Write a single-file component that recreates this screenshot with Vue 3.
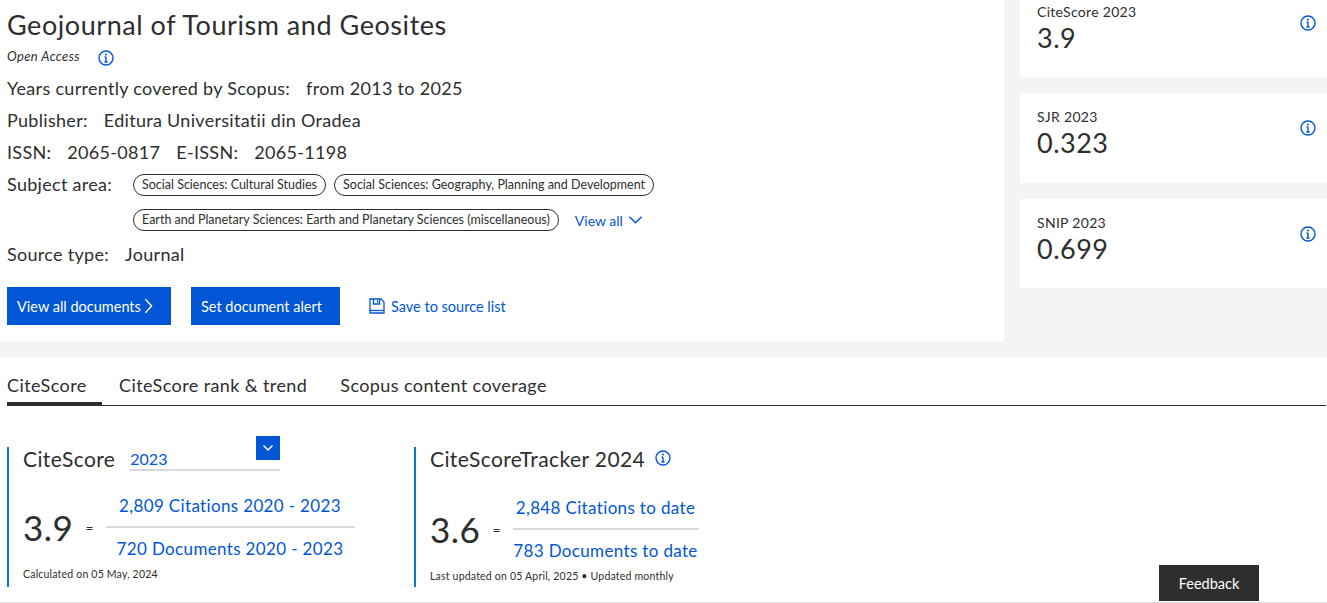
<script setup>
const chips1 = ['Social Sciences: Cultural Studies', 'Social Sciences: Geography, Planning and Development']
const metrics = [
  { label: 'CiteScore 2023', value: '3.9', cls: 'm1' },
  { label: 'SJR 2023', value: '0.323', cls: 'm2' },
  { label: 'SNIP 2023', value: '0.699', cls: 'm3' }
]
</script>

<template>
  <div class="page">
    <div class="top">
      <section class="info">
        <h1 class="title">Geojournal of Tourism and Geosites</h1>
        <div class="oa">
          <em>Open Access</em>
          <svg class="ico" viewBox="0 0 16 16"><circle cx="8" cy="8" r="7" /><path d="M8 7v5M6.4 12h3.2M6.6 7H8" /><circle class="dot" cx="8" cy="4.6" r="1" /></svg>
        </div>
        <div class="line l1"><span>Years currently covered by Scopus:</span><span>from 2013 to 2025</span></div>
        <div class="line"><span>Publisher:</span><span>Editura Universitatii din Oradea</span></div>
        <div class="line"><span>ISSN:</span><span>2065-0817</span><span class="sp">E-ISSN:</span><span>2065-1198</span></div>
        <div class="subject">
          <span class="sub-label">Subject area:</span>
          <div class="chips">
            <div class="chip-row">
              <span v-for="c in chips1" :key="c" class="chip">{{ c }}</span>
            </div>
            <div class="chip-row r2">
              <span class="chip">Earth and Planetary Sciences: Earth and Planetary Sciences (miscellaneous)</span>
              <a class="viewall">View all
                <svg viewBox="0 0 16 10" class="chev"><path d="M1.5 1.5 8 8l6.5-6.5" /></svg>
              </a>
            </div>
          </div>
        </div>
        <div class="line st"><span>Source type:</span><span>Journal</span></div>
        <div class="actions">
          <button class="btn b1">View all documents
            <svg viewBox="0 0 10 18" class="gt"><path d="M1.5 1.5 8.5 9l-7 7.5" /></svg>
          </button>
          <button class="btn b2">Set document alert</button>
          <a class="save">
            <svg viewBox="0 0 16 16" class="disk"><path d="M1 1h11l3 3v11H1z" /><path d="M4.5 1v5h6V1M8.5 2.5v2" /><path d="M1 12.500h14" /></svg>
            Save to source list
          </a>
        </div>
      </section>
      <aside class="side">
        <div v-for="m in metrics" :key="m.label" class="metric" :class="m.cls">
          <div>
            <div class="m-label">{{ m.label }}</div>
            <div class="m-value">{{ m.value }}</div>
          </div>
          <svg class="ico" viewBox="0 0 16 16"><circle cx="8" cy="8" r="7" /><path d="M8 7v5M6.4 12h3.2M6.6 7H8" /><circle class="dot" cx="8" cy="4.6" r="1" /></svg>
        </div>
      </aside>
    </div>

    <section class="lower">
      <nav class="tabs">
        <a class="tab active">CiteScore</a>
        <a class="tab">CiteScore rank &amp; trend</a>
        <a class="tab">Scopus content coverage</a>
      </nav>
      <div class="scores">
        <div class="score s1">
          <div class="s-head">
            <span class="s-title">CiteScore</span>
            <div class="select">
              <span>2023</span>
              <span class="sel-btn"><svg viewBox="0 0 12 8"><path d="M1.500 1.500 6 6l4.500-4.500" /></svg></span>
            </div>
          </div>
          <div class="formula">
            <span class="big">3.9</span>
            <span class="eq">=</span>
            <div class="frac">
              <a>2,809 Citations 2020 - 2023</a>
              <a>720 Documents 2020 - 2023</a>
            </div>
          </div>
          <div class="note">Calculated on 05 May, 2024</div>
        </div>
        <div class="score s2">
          <div class="s-head">
            <span class="s-title">CiteScoreTracker 2024</span>
            <svg class="ico" viewBox="0 0 16 16"><circle cx="8" cy="8" r="7" /><path d="M8 7v5M6.4 12h3.2M6.6 7H8" /><circle class="dot" cx="8" cy="4.6" r="1" /></svg>
          </div>
          <div class="formula">
            <span class="big">3.6</span>
            <span class="eq">=</span>
            <div class="frac">
              <a>2,848 Citations to date</a>
              <a>783 Documents to date</a>
            </div>
          </div>
          <div class="note">Last updated on 05 April, 2025 • Updated monthly</div>
        </div>
      </div>
    </section>
    <button class="feedback">Feedback</button>
  </div>
</template>

<style scoped>
.page {
  position: relative;
  width: 1327px;
  height: 603px;
  overflow: hidden;
  background: #f4f4f4;
  color: #2e2e2e;
  font-family: Lato, "Noto Sans", sans-serif;
}
.top { display: flex; height: 342px; }
.info {
  width: 1004px;
  background: #fff;
  padding: 8px 0 0 7px;
  box-sizing: border-box;
}
.title { margin: 0; font-size: 27px; line-height: 34px; font-weight: 400; letter-spacing: 0.55px; }
.oa { display: flex; align-items: center; height: 30px; font-size: 13px; letter-spacing: .4px; }
.oa em { margin-top: -3px; }
.oa .ico { margin-left: 18px; margin-top: 1px; }
.ico { width: 16px; height: 16px; flex: none; fill: none; stroke: #0156d6; stroke-width: 1.4; }
.ico .dot { fill: #0156d6; stroke: none; }
.line { display: flex; gap: 16px; font-size: 18px; line-height: 32px; letter-spacing: .3px; }
.line .sp { margin-left: 0; }
.subject { display: flex; height: 70px; }
.sub-label { font-size: 18px; line-height: 32px; letter-spacing: .3px; width: 126px; flex: none; }
.chips { display: flex; flex-direction: column; gap: 13px; padding-top: 6px; }
.chip-row { display: flex; gap: 8px; align-items: center; margin-left: 0; }
.r2 { margin-left: 0; gap: 16px; }
.chip {
  display: block;
  height: 22px;
  line-height: 20px;
  box-sizing: border-box;
  border: 1px solid #2e2e2e;
  border-radius: 11px;
  padding: 0 8px;
  font-size: 12.5px;
  white-space: nowrap;
}
.viewall { color: #0156d6; font-size: 14px; display: flex; align-items: center; gap: 5px; }
.chev { width: 15px; height: 10px; fill: none; stroke: #0156d6; stroke-width: 1.5; }
.st { margin-top: 0; }
.actions { display: flex; align-items: center; margin-top: 17px; }
.btn {
  height: 38px;
  background: #0156d6;
  color: #fff;
  border: 0;
  font: inherit;
  font-size: 14.5px;
  padding: 0 10px;
  display: flex;
  align-items: center;
  gap: 3px;
}
.b1 { width: 164px; }
.b2 { width: 149px; margin-left: 20px; }
.gt { width: 9px; height: 16px; fill: none; stroke: #fff; stroke-width: 1.6; }
.save { display: flex; align-items: center; gap: 6px; margin-left: 29px; color: #0156d6; font-size: 14.5px; }
.disk { width: 16px; height: 16px; fill: none; stroke: #0156d6; stroke-width: 1.3; }
.side { flex: 1; padding-left: 16px; display: flex; flex-direction: column; gap: 16px; }
.metric { background: #fff; padding-left: 17px; padding-right: 11px; display: flex; justify-content: space-between; box-sizing: border-box; }
.m1 { height: 77px; }
.m2 { height: 90px; padding-top: 15px; }
.m3 { height: 89px; padding-top: 15px; }
.m-label { font-size: 14px; line-height: 18px; letter-spacing: .3px; }
.m-value { font-size: 27px; line-height: 34px; letter-spacing: .5px; }
.m1 { padding-top: 3px; }
.metric .ico { margin-top: 12px; }
.m1 .ico { margin-top: 12px; }
.lower { margin-top: 16px; height: 244px; background: #fff; border-bottom: 1px solid #ddd; box-sizing: content-box; }
.tabs { display: flex; margin-left: 7px; gap: 33px; height: 48px; border-bottom: 1px solid #2e2e2e; box-sizing: border-box; width: 1319px; }
.tab { font-size: 18px; letter-spacing: .4px; line-height: 55px; }
.tab:first-child { }
.active { width: 95px; box-sizing: border-box; height: 48px; border-bottom: 4px solid #2e2e2e; margin-right: -16px; }
.scores { display: flex; margin-left: 7px; margin-top: 41px; }
.score { border-left: 2px solid #007fc4; height: 140px; padding-left: 14px; box-sizing: border-box; position: relative; }
.s1 { width: 407px; }
.s-head { display: flex; align-items: center; height: 22px; }
.s-title { font-size: 21px; letter-spacing: .4px; }
.s2 .ico { margin-left: 10px; }
.select { margin-left: 15px; width: 150px; height: 22px; border-bottom: 2px solid #d9d9d9; position: relative; color: #0156d6; font-size: 16px; line-height: 24px; margin-top: 1px; }
.sel-btn { position: absolute; right: 0; top: -11px; width: 24px; height: 24px; background: #0156d6; display: flex; align-items: center; justify-content: center; }
.sel-btn svg { width: 12px; height: 8px; fill: none; stroke: #fff; stroke-width: 1.500; }
.formula { display: flex; align-items: center; margin-top: 16px; height: 84px; }
.s2 .formula { margin-top: 18px; }
.big { font-size: 35px; letter-spacing: .5px; }
.eq { font-size: 14px; margin: 0 12px; }
.frac { display: flex; flex-direction: column; align-items: center; color: #0156d6; font-size: 17px; letter-spacing: .35px; }
.s1 .frac { width: 249px; }
.s2 .frac { width: 186px; }
.frac a { line-height: 41px; }
.frac a:first-child { border-bottom: 2px solid #d9d9d9; width: 100%; text-align: center; }
.note { font-size: 10.500px; letter-spacing: .2px; margin-top: -1px; white-space: nowrap; }
.feedback {
  position: absolute;
  left: 1159px;
  top: 565px;
  width: 100px;
  height: 36px;
  background: #2e2e2e;
  color: #fff;
  border: 0;
  font: inherit;
  font-size: 14.500px;
}
</style>
